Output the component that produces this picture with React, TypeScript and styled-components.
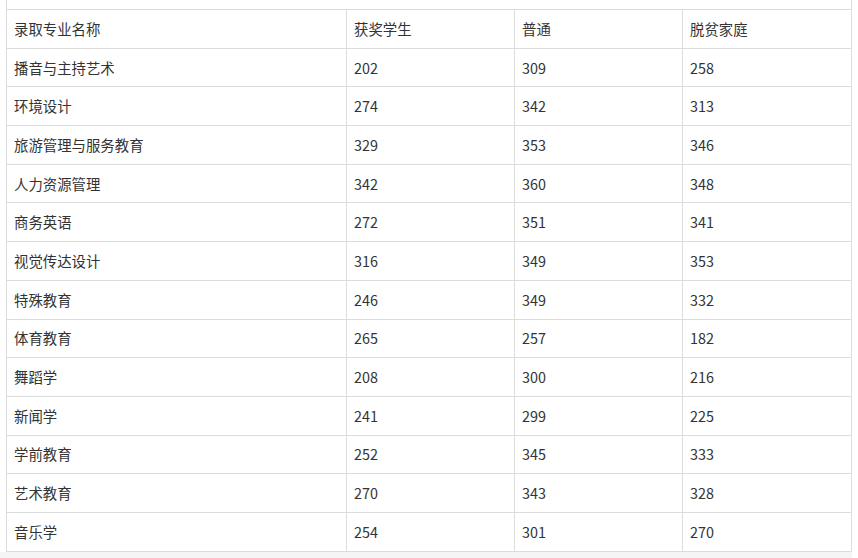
import React from "react";
import styled, { createGlobalStyle } from "styled-components";

const GlobalStyle = createGlobalStyle`
  html, body {
    margin: 0;
    padding: 0;
    background: #ffffff;
  }
  body {
    font-family: "Noto Sans CJK SC", "Noto Sans", sans-serif;
    color: #333333;
  }
`;

type Row = [string, number, number, number];

const rows: Row[] = [
  ["播音与主持艺术", 202, 309, 258],
  ["环境设计", 274, 342, 313],
  ["旅游管理与服务教育", 329, 353, 346],
  ["人力资源管理", 342, 360, 348],
  ["商务英语", 272, 351, 341],
  ["视觉传达设计", 316, 349, 353],
  ["特殊教育", 246, 349, 332],
  ["体育教育", 265, 257, 182],
  ["舞蹈学", 208, 300, 216],
  ["新闻学", 241, 299, 225],
  ["学前教育", 252, 345, 333],
  ["艺术教育", 270, 343, 328],
  ["音乐学", 254, 301, 270],
];

const headers = ["录取专业名称", "获奖学生", "普通", "脱贫家庭"];

const App: React.FC = () => {
  return (
    <Page>
      <GlobalStyle />
      <Sheet>
        <Table>
          <colgroup>
            <Col $w={340} />
            <Col $w={168} />
            <Col $w={168} />
            <Col $w={169} />
          </colgroup>
          <tbody>
            <CutRow>
              <td colSpan={4} />
            </CutRow>
            <tr>
              {headers.map((h) => (
                <Cell key={h}>{h}</Cell>
              ))}
            </tr>
            {rows.map((r) => (
              <tr key={r[0]}>
                {r.map((v, i) => (
                  <Cell key={i}>{v}</Cell>
                ))}
              </tr>
            ))}
          </tbody>
        </Table>
      </Sheet>
      <Footer />
    </Page>
  );
};

export default App;

const Page = styled.div`
  width: 852px;
  height: 558px;
  display: flex;
  flex-direction: column;
  overflow: hidden;
`;

const Sheet = styled.div`
  padding: 0 0 0 6px;
  background: #ffffff;
`;

const Table = styled.table`
  border-collapse: collapse;
  table-layout: fixed;
  width: 846px;
  font-size: 14.4px;
  color: #333333;
`;

const Col = styled.col<{ $w: number }>`
  width: ${(p) => p.$w}px;
`;

const CutRow = styled.tr`
  height: 9.5px;
  td {
    padding: 0;
    border: 1px solid #dcdcdc;
    border-top: none;
  }
`;

const Cell = styled.td`
  height: 38.7px;
  padding: 0 7px;
  box-sizing: border-box;
  border: 1px solid #dcdcdc;
  text-align: left;
  vertical-align: middle;
  white-space: nowrap;
  line-height: 20px;
`;

const Footer = styled.div`
  flex: 1;
  background: #f5f5f5;
`;
